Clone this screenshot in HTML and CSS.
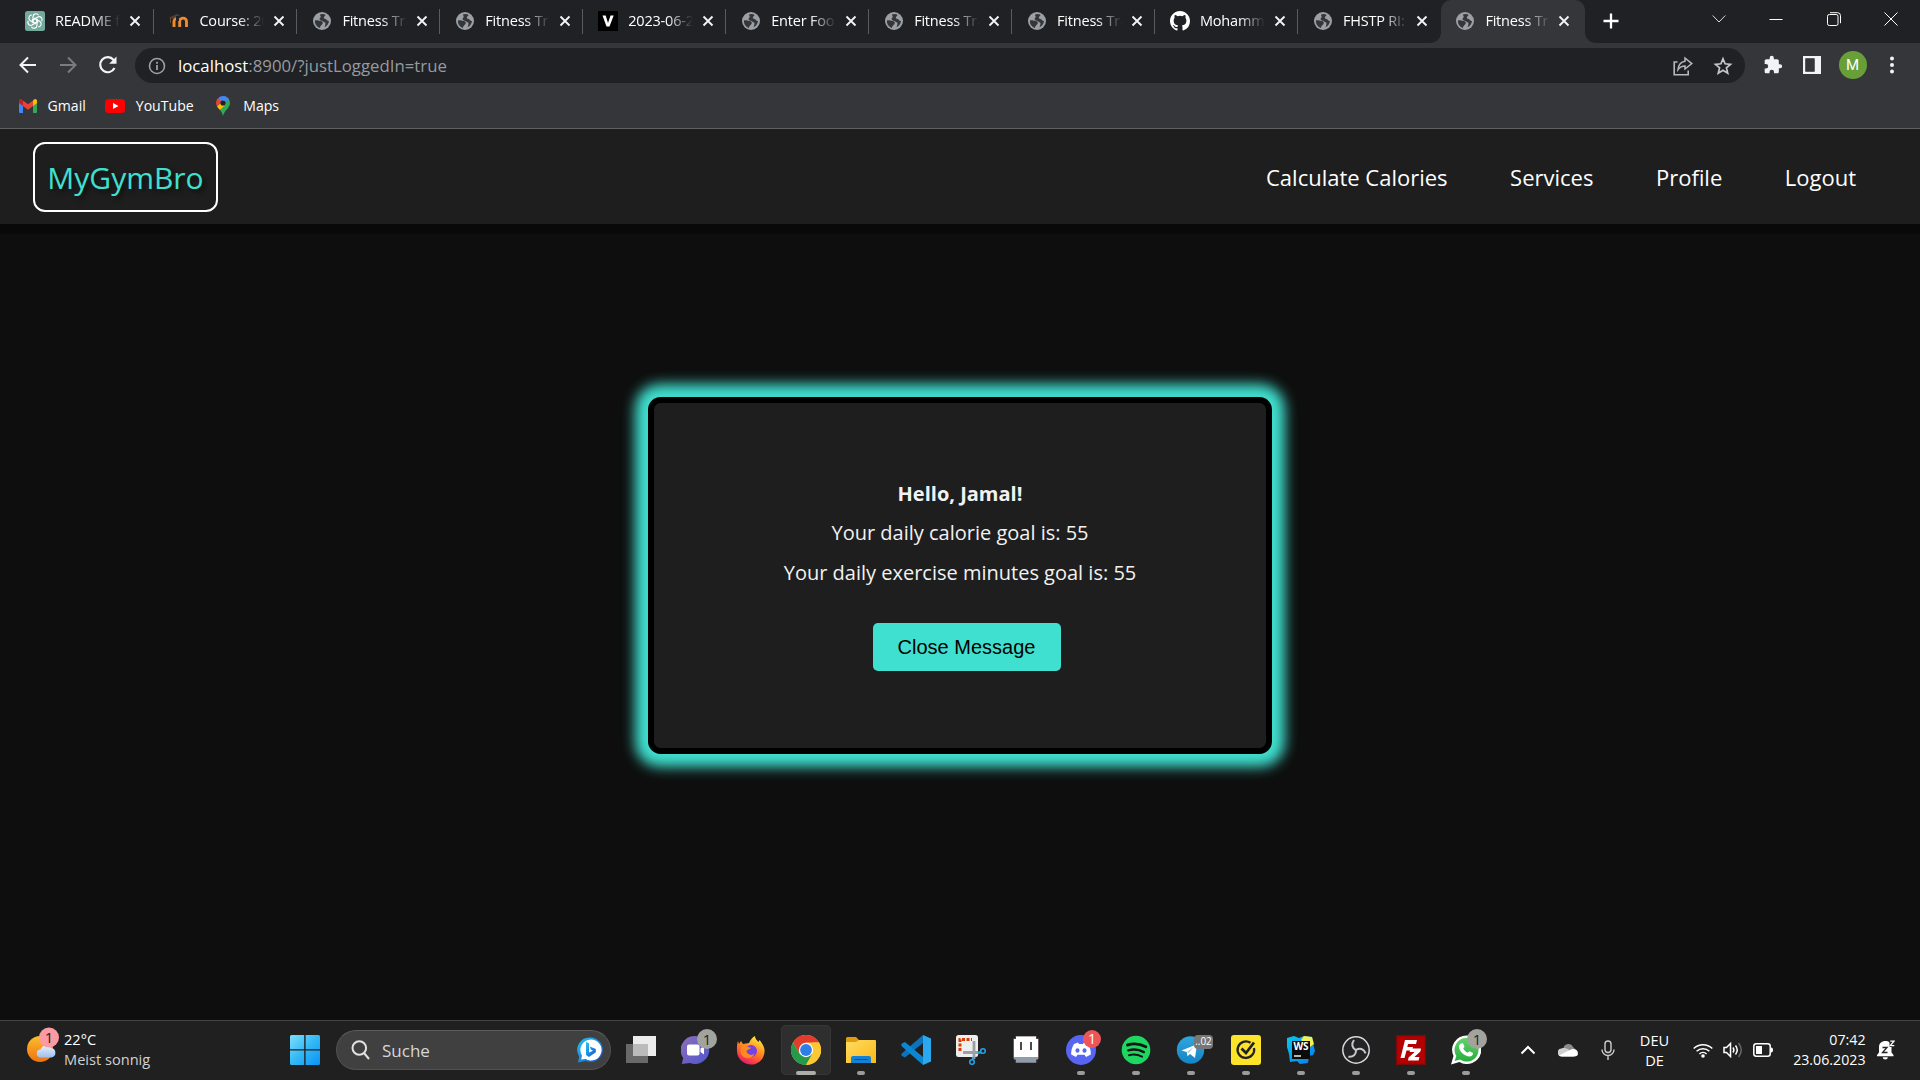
FILE: index.html
```html
<!DOCTYPE html>
<html lang="de">
<head>
<meta charset="utf-8">
<title>Fitness Tracker</title>
<link rel="stylesheet" href="styles.css">
</head>
<body>
<svg class="defs" width="0" height="0">
  <defs>
    <symbol id="globe" viewBox="0 0 20 20"><circle cx="10" cy="10" r="9" fill="#9aa0a6"/><path d="M3 9.500C5 9 6.500 10 8.500 10c2 .2 2.500 1.200 2.200 2.500-.4 1.500-2.400 1.500-2.700 4.500C5 16 2.500 13 3 9.500zM8 3.500c1.500-.8 4-.7 5.500.2-.3 1.500-1.600 1.700-1.700 3C11.700 8 14 7.500 15 9c.5.900 1.200 1.200 2 1-.3 3-2 5-4.500 6.200 1-2 .8-3.200 1-4.400-2-.6-2-1.800-4-2.100C7.300 9.300 7 7.500 8.500 6.500 9.300 5.800 8 5 8 3.500z" fill="#35363a"/></symbol>
    <symbol id="x" viewBox="0 0 12 12"><path d="M1.500 1.500l9 9M10.500 1.500l-9 9" stroke="#f1f3f4" stroke-width="1.900" fill="none"/></symbol>
    <linearGradient id="win" x1="0" y1="0" x2="1" y2="1"><stop offset="0" stop-color="#7de0fb"/><stop offset=".5" stop-color="#33b8f6"/><stop offset="1" stop-color="#0a93f5"/></linearGradient>
    <linearGradient id="sun" x1="0" y1="0" x2="0" y2="1"><stop offset="0" stop-color="#fbc02d"/><stop offset="1" stop-color="#f0700f"/></linearGradient>
    <linearGradient id="cloud" x1="0" y1="0" x2="0" y2="1"><stop offset="0" stop-color="#e8f0fc"/><stop offset="1" stop-color="#9dbfee"/></linearGradient>
    <linearGradient id="bing" x1="0" y1="0" x2="1" y2="1"><stop offset="0" stop-color="#25c4f2"/><stop offset="1" stop-color="#1554d0"/></linearGradient>
    <linearGradient id="chat" x1="0" y1="0" x2="1" y2="1"><stop offset="0" stop-color="#8e6fb8"/><stop offset="1" stop-color="#4f55cf"/></linearGradient>
    <linearGradient id="fox" x1=".8" y1="0" x2=".3" y2="1"><stop offset="0" stop-color="#fff44f"/><stop offset=".4" stop-color="#ff9a1f"/><stop offset=".75" stop-color="#ff4b3a"/><stop offset="1" stop-color="#e3147a"/></linearGradient>
    <linearGradient id="folder" x1="0" y1="0" x2="1" y2="1"><stop offset="0" stop-color="#ffdb63"/><stop offset="1" stop-color="#fbb917"/></linearGradient>
    <linearGradient id="tele" x1="0" y1="0" x2="0" y2="1"><stop offset="0" stop-color="#2fa6de"/><stop offset="1" stop-color="#1584c4"/></linearGradient>
    <linearGradient id="ws" x1="0" y1="0" x2="1" y2="1"><stop offset="0" stop-color="#08c6ef"/><stop offset="1" stop-color="#077cf0"/></linearGradient>
    <linearGradient id="wa" x1="0" y1="0" x2="0" y2="1"><stop offset="0" stop-color="#5fd46d"/><stop offset="1" stop-color="#27ad3d"/></linearGradient>
  </defs>
</svg>

<header class="browser">
  <div class="tabstrip">
    <div class="tab"><svg class="fav" viewBox="0 0 20 20"><rect width="20" height="20" rx="2.500" fill="#74aa9c"/><g fill="none" stroke="#fff" stroke-width="1.150"><path id="petal" d="M8 9V5.500a3 3 0 0 1 5.600-1.200M8 9v2.200l3 1.700"/><use href="#petal" transform="rotate(60 10 10)"/><use href="#petal" transform="rotate(120 10 10)"/><use href="#petal" transform="rotate(180 10 10)"/><use href="#petal" transform="rotate(240 10 10)"/><use href="#petal" transform="rotate(300 10 10)"/></g></svg><span class="title">README f</span><svg class="close"><use href="#x"/></svg></div>
    <div class="tab"><svg class="fav" viewBox="0 0 20 20"><path d="M0 6.500L8 3l3 1.500L4 8z" fill="#4b4038"/><path d="M1.500 7v5" stroke="#6a4a32" stroke-width="1"/><path d="M5 16v-5.500a2.600 2.600 0 0 1 5.700 0V16M10.700 10.500a3 3 0 0 1 6.800 0V16" fill="none" stroke="#f08a2c" stroke-width="2.900"/><path d="M7 5h3v5H7z" fill="#202124"/></svg><span class="title">Course: 20</span><svg class="close"><use href="#x"/></svg></div>
    <div class="tab"><svg class="fav"><use href="#globe"/></svg><span class="title">Fitness Tra</span><svg class="close"><use href="#x"/></svg></div>
    <div class="tab"><svg class="fav"><use href="#globe"/></svg><span class="title">Fitness Tra</span><svg class="close"><use href="#x"/></svg></div>
    <div class="tab"><svg class="fav" viewBox="0 0 20 20"><rect width="20" height="20" fill="#000"/><path d="M4.500 4.500h3.200L10 12l2.500-7.500h3.200L11.500 15.500h-3z" fill="#fff"/></svg><span class="title">2023-06-2</span><svg class="close"><use href="#x"/></svg></div>
    <div class="tab"><svg class="fav"><use href="#globe"/></svg><span class="title">Enter Foo</span><svg class="close"><use href="#x"/></svg></div>
    <div class="tab"><svg class="fav"><use href="#globe"/></svg><span class="title">Fitness Tra</span><svg class="close"><use href="#x"/></svg></div>
    <div class="tab"><svg class="fav"><use href="#globe"/></svg><span class="title">Fitness Tra</span><svg class="close"><use href="#x"/></svg></div>
    <div class="tab"><svg class="fav" viewBox="0 0 16 16"><path fill="#fff" d="M8 0C3.580 0 0 3.580 0 8c0 3.540 2.290 6.530 5.470 7.590.4.070.55-.17.55-.38 0-.19-.01-.82-.01-1.490-2.010.37-2.530-.49-2.690-.94-.09-.23-.48-.94-.82-1.130-.28-.15-.68-.52-.01-.53.63-.01 1.080.58 1.230.82.72 1.210 1.870.87 2.330.66.070-.52.28-.87.51-1.070-1.780-.2-3.640-.89-3.640-3.950 0-.87.31-1.590.82-2.150-.08-.2-.36-1.020.08-2.120 0 0 .67-.21 2.200.82a7.600 7.600 0 0 1 4 0c1.530-1.040 2.200-.82 2.200-.82.44 1.100.16 1.920.08 2.120.51.56.82 1.270.82 2.150 0 3.070-1.870 3.750-3.650 3.950.29.25.54.73.54 1.480 0 1.070-.01 1.930-.01 2.200 0 .21.15.46.55.38A8 8 0 0 0 16 8c0-4.420-3.580-8-8-8z"/></svg><span class="title">Mohamm</span><svg class="close"><use href="#x"/></svg></div>
    <div class="tab last"><svg class="fav"><use href="#globe"/></svg><span class="title">FHSTP RI:</span><svg class="close"><use href="#x"/></svg></div>
    <div class="tab active"><svg class="fav"><use href="#globe"/></svg><span class="title">Fitness Tra</span><svg class="close"><use href="#x"/></svg></div>
    <svg class="plus" viewBox="0 0 16 16"><path d="M8 .5v15M.5 8h15" stroke="#fff" stroke-width="2.300"/></svg>
    <div class="winctl">
      <svg viewBox="0 0 14 14"><path d="M.7 3.500L7 10l6.300-6.500" fill="none" stroke="#ddd"/></svg>
      <svg viewBox="0 0 14 14"><path d="M.5 7.500h13" stroke="#fff"/></svg>
      <svg viewBox="0 0 14 14"><rect x=".5" y="2.500" width="10.500" height="11" rx="1.800" fill="none" stroke="#fff"/><path d="M3 .7h7.500a3 3 0 0 1 3 3v7.500" fill="none" stroke="#fff"/></svg>
      <svg viewBox="0 0 14 14"><path d="M.5.500l13 13M13.500.500l-13 13" stroke="#fff"/></svg>
    </div>
  </div>

  <div class="toolbar">
    <svg class="tool back" viewBox="0 0 20 20"><path d="M18 10H3M10 2.500L2.500 10l7.500 7.500" fill="none" stroke="#f1f3f4" stroke-width="2"/></svg>
    <svg class="tool fwd" viewBox="0 0 20 20"><path d="M2 10H17M10 2.500l7.500 7.500-7.500 7.500" fill="none" stroke="#7b7c7f" stroke-width="2"/></svg>
    <svg class="tool reload" viewBox="0 0 20 20"><path d="M16.500 13A7.500 7.500 0 1 1 15.600 5L17 6.500" fill="none" stroke="#f1f3f4" stroke-width="2.200"/><path d="M18.500 1.500v7.300h-7.300z" fill="#f1f3f4"/></svg>
    <div class="omnibox">
      <svg class="info" viewBox="0 0 18 18"><circle cx="9" cy="9" r="7.500" fill="none" stroke="#9aa0a6" stroke-width="1.600"/><path d="M9 8v5M9 4.800v1.900" stroke="#9aa0a6" stroke-width="1.800"/></svg>
      <span class="url">localhost<i>:8900/?justLoggedIn=true</i></span>
      <svg class="share" viewBox="0 0 20 20"><path d="M4.500 6H1.200v12.800h14V14.500" fill="none" stroke="#b6b8bb" stroke-width="1.600"/><path d="M12 2l6.800 5.600L12 13v-3c-3 0-5 1-7 3.600C5.500 9 8 5.800 12 5.200z" fill="none" stroke="#b6b8bb" stroke-width="1.500"/></svg>
      <svg class="star" viewBox="0 0 20 20"><path d="M10 2.800l2.100 5 5.400.5-4.100 3.500 1.300 5.300-4.700-2.900-4.700 2.900 1.300-5.300-4.100-3.500 5.400-.5z" fill="none" stroke="#c5c7ca" stroke-width="1.700"/></svg>
    </div>
    <svg class="puzzle" viewBox="0 0 24 24"><path fill="#f1f3f4" d="M20.500 11H19V7c0-1.100-.9-2-2-2h-4V3.500a2.500 2.500 0 0 0-5 0V5H4c-1.100 0-2 .9-2 2v3.800h1.500a2.700 2.700 0 0 1 0 5.400H2V20c0 1.100.9 2 2 2h3.800v-1.500a2.700 2.700 0 0 1 5.400 0V22H17c1.100 0 2-.9 2-2v-4h1.500a2.500 2.500 0 0 0 0-5z"/></svg>
    <svg class="panel" viewBox="0 0 18 18"><rect x="1.200" y="1.200" width="15.600" height="15.600" fill="none" stroke="#f1f3f4" stroke-width="2.400"/><path d="M11.500 1h5.500v16h-5.500z" fill="#f1f3f4"/><path d="M2.500 2.500h9v13h-9z" fill="#35363a"/></svg>
    <span class="avatar">M</span>
    <svg class="dots" viewBox="0 0 4 18"><g fill="#f1f3f4"><circle cx="2" cy="2.500" r="2"/><circle cx="2" cy="9" r="2"/><circle cx="2" cy="15.500" r="2"/></g></svg>
  </div>

  <div class="bookmarks">
    <svg class="gmail" viewBox="0 0 18 14"><path d="M0 2v11a1 1 0 0 0 1 1h3V5z" fill="#4285f4"/><path d="M18 2v11a1 1 0 0 1-1 1h-3V5z" fill="#34a853"/><path d="M14 1.500V7l4-3V2c0-1.800-2-2.500-3.300-1.300z" fill="#fbbc04"/><path d="M4 7V1.500l5 3.800 5-3.800V7l-5 3.800z" fill="#ea4335"/><path d="M0 2v2l4 3V1.500L3.300.7C2-.5 0 .2 0 2z" fill="#c5221f"/></svg><span>Gmail</span>
    <svg class="yt" viewBox="0 0 20 14"><rect width="20" height="14" rx="3.500" fill="#f00"/><path d="M8 4l5.500 3L8 10z" fill="#fff"/></svg><span>YouTube</span>
    <svg class="maps" viewBox="0 0 14 20"><path d="M7 0a7 7 0 0 1 7 7c0 5-5.500 7-7 13-.6-2.500-1.700-4.200-3-6L12 3z" fill="#34a853"/><path d="M7 0a7 7 0 0 1 6 3.500L7 10 2 2.200A7 7 0 0 1 7 0z" fill="#4285f4"/><path d="M2 2.200L6 5.500 1 10.500C-.6 7.500-.2 4.500 2 2.200z" fill="#ea4335"/><path d="M1 10.500L8 4l1.500 4.500L4 14c-1.200-1.300-2.300-2.300-3-3.500z" fill="#fbbc04"/><circle cx="7" cy="7" r="2.600" fill="#202124"/></svg><span>Maps</span>
  </div>
</header>

<main class="page">
  <nav class="nav">
    <a class="brand">MyGymBro</a>
    <div class="links"><a>Calculate Calories</a><a>Services</a><a>Profile</a><a>Logout</a></div>
  </nav>
  <section class="stage">
    <div class="modal">
      <p class="hello">Hello, Jamal!</p>
      <p>Your daily calorie goal is: 55</p>
      <p>Your daily exercise minutes goal is: 55</p>
      <button class="btn">Close Message</button>
    </div>
  </section>
</main>

<footer class="taskbar">
  <div class="weather">
    <svg viewBox="0 0 32 44"><circle cx="13" cy="25" r="13" fill="url(#sun)"/><path d="M14 33.500a4 4 0 0 1-.5-8 6 6 0 0 1 10.500-1.500 4.800 4.800 0 0 1 .5 9.500z" fill="url(#cloud)"/><circle cx="22" cy="13.500" r="10" fill="#fc9aa4"/><text x="22" y="19" text-anchor="middle" font-size="15" fill="#1c1c1c">1</text></svg>
    <div class="wtext"><span>22°C</span><span class="desc">Meist sonnig</span></div>
  </div>
  <svg class="start" viewBox="0 0 30 30"><path d="M1.500 0h12.700v14.200H0V1.500A1.500 1.500 0 0 1 1.500 0zM15.600 0h12.900A1.500 1.500 0 0 1 30 1.500v12.700H15.600zM0 15.600h14.200V30H1.500A1.500 1.500 0 0 1 0 28.500zM15.600 15.600H30v12.900a1.500 1.500 0 0 1-1.500 1.500H15.600z" fill="url(#win)"/></svg>
  <div class="search">
    <svg class="mag" viewBox="0 0 20 20"><circle cx="8.300" cy="8" r="6.800" fill="none" stroke="#e2e2e2" stroke-width="2"/><path d="M13 13l5 6" stroke="#e2e2e2" stroke-width="2"/></svg>
    <span>Suche</span>
    <svg class="bing" viewBox="0 0 26 26"><path d="M13.500.5a12.300 12.300 0 1 1-5 23.500L1 25.500l1.200-6A12.400 12.400 0 0 1 13.500.5z" fill="url(#bing)"/><path d="M13.700 2.500a10.500 10.500 0 1 1-5 19.500l-4.500.5.800-4A10.500 10.500 0 0 1 13.700 2.500z" fill="#fff"/><path d="M9 5l3 1.200v9.300l4-1.700-2.200-1.200-1-3 6 2.300v3.300L12 20l-3-2z" fill="url(#bing)"/></svg>
  </div>
  <div class="apps">
    <div class="app"><svg viewBox="0 0 30 30"><path d="M7 1h23v20H7z" fill="#ececec"/><path d="M0 9h22v19H0z" fill="#777" fill-opacity=".85"/><path d="M7 9h15v12H7z" fill="#bbb"/></svg></div>
    <div class="app"><svg viewBox="0 0 30 30"><path d="M14.500 1A14 14 0 1 1 9 28L.8 29l1.400-6A14 14 0 0 1 14.500 1z" fill="url(#chat)"/><rect x="6" y="9.500" width="12.500" height="11" rx="2" fill="#fff"/><path d="M19.500 13.500l3.500-2.500v8.500l-3.500-2.500z" fill="#fff"/></svg><b class="badge gray">1</b></div>
    <div class="app"><svg viewBox="0 0 30 30"><path d="M2 6l1 3 2-3 2 3c2 0 4-1 6-1 1.500-3 3-5.500 6-7 0 2.500 1.500 4 3.500 6l1-2c3 4 5.500 7 5 12C28 24.500 22 29.500 15 29.500S1 24 1 16C.8 12 1 9 2 6z" fill="url(#fox)"/><circle cx="15" cy="16" r="6" fill="#7542e5"/><path d="M5 12c3-2 6-1 7 0l3 .8c-1 2-4 1.500-4.500 3.500.5 3 4.500 5 8 2.500-3 7-13 5-14-2z" fill="#ff8a1e"/></svg></div>
    <div class="app current"><svg viewBox="0 0 30 30"><circle cx="15" cy="15" r="15" fill="#fcc934"/><path d="M2 7.500A15 15 0 0 1 28 7.500H15L8.500 18.800z" fill="#e33b2e"/><path d="M2 7.500a15 15 0 0 0 13 22.500l6.500-11.200H8.500z" fill="#249a4a"/><path d="M28 7.500A15 15 0 0 1 15 30l6.500-11.200V7.500z" fill="#fcc934"/><circle cx="15" cy="15" r="7.200" fill="#fff"/><circle cx="15" cy="15" r="5.900" fill="#2f7de9"/></svg><em class="run"></em></div>
    <div class="app"><svg viewBox="0 0 30 30"><path d="M0 3.500A1.500 1.500 0 0 1 1.500 2H10l3 3v4H0z" fill="#e09c0c"/><path d="M0 7h10l3-2h16a1 1 0 0 1 1 1v22H0z" fill="url(#folder)"/><path d="M5 28v-5a2 2 0 0 1 2-2h16a2 2 0 0 1 2 2v5z" fill="#1281d6"/><path d="M8.500 24.500h13" stroke="#0b4f94"/></svg><em class="run"></em></div>
    <div class="app"><svg viewBox="0 0 30 30"><path d="M22 0v8L4 22.500 1 21q-1.500-1.500 0-2.800z" fill="#0a73bb"/><path d="M1 8.500L4 7l18 15v8L1 11.500q-1.500-1.500 0-3z" fill="#0c86d0"/><path d="M22 0l8 3.500v23L22 30z" fill="#2aa9f0"/></svg></div>
    <div class="app"><svg viewBox="0 0 30 30"><rect width="22" height="22" rx="2.500" fill="#eee"/><path d="M4 16V4.500h12" fill="none" stroke="#d83b01" stroke-width="3" stroke-dasharray="3 1.500"/><path d="M7 17.500h15M18 6v18" stroke="#9aa0a6" stroke-width="2.800"/><path d="M22 18l3-1M17 22v3" stroke="#269fe0" stroke-width="2.500"/><circle cx="27" cy="16" r="2.300" fill="none" stroke="#269fe0" stroke-width="1.600"/><circle cx="16" cy="27" r="2.300" fill="none" stroke="#269fe0" stroke-width="1.600"/></svg></div>
    <div class="app"><svg viewBox="0 0 30 30"><path d="M4.500 1h21v2.500H28v20h-2.500V28h-21v-4.500H2v-20h2.500z" fill="#665962"/><path d="M5 1.500h20v2.500h2v18H3V4h2z" fill="#fff"/><path d="M3 22h24v2.500h-2v3H5v-3H3z" fill="#8f9daa"/><path d="M10 7v8M20 7v8" stroke="#504550" stroke-width="2"/></svg></div>
    <div class="app"><svg viewBox="0 0 30 30"><circle cx="15" cy="15" r="15" fill="#5865f2"/><path d="M8 9l4-1.500 1 1.500h4l1-1.500L22 9c2.200 3.500 3 7 2.800 10.500L20 22l-1.500-2.300h-7L10 22l-4.800-2.500C5 16 5.800 12.500 8 9z" fill="#fff"/><ellipse cx="11.500" cy="15.500" rx="2" ry="2.300" fill="#5865f2"/><ellipse cx="18.500" cy="15.500" rx="2" ry="2.300" fill="#5865f2"/></svg><b class="badge red">1</b><em class="run"></em></div>
    <div class="app"><svg viewBox="0 0 30 30"><circle cx="15" cy="15" r="14.300" fill="#1ed760"/><g fill="none" stroke="#151515" stroke-linecap="round"><path d="M6.500 10c6-1.800 13-1 18.300 1.800" stroke-width="2.900"/><path d="M7.300 15.300c5.500-1.500 11-.8 15.600 1.800" stroke-width="2.400"/><path d="M8 20.200c4.500-1.200 9-.6 13 1.500" stroke-width="2"/></g></svg><em class="run"></em></div>
    <div class="app"><svg viewBox="0 0 30 30"><circle cx="14.500" cy="15" r="13.700" fill="url(#tele)"/><path d="M5.500 15.500L21 9.200l-2 13.800-5-4-2.500 2.300-.8-4.300z" fill="#fff"/><path d="M10.700 17l7-5-5 6z" fill="#a8cfe5"/></svg><b class="badge dots2">..02</b><em class="run"></em></div>
    <div class="app"><svg viewBox="0 0 30 30"><rect width="30" height="30" rx="3" fill="#fde42b"/><path d="M19.500 7.800A8.300 8.300 0 1 0 23 13" fill="none" stroke="#222" stroke-width="2.300"/><path d="M10.500 13.500l4.500 4.500L23 7.500" fill="none" stroke="#222" stroke-width="2.800"/></svg><em class="run"></em></div>
    <div class="app"><svg viewBox="0 0 30 30"><path d="M1 3l7-2 5 2 5-2 8 1 1 6 2 8-2 4-4 1-1 7-8 1-3-3-7 1-1-8-2-7z" fill="url(#ws)"/><path d="M15 5l3-4 8 1 2 7-4 3z" fill="#f4ef56"/><rect x="6" y="6" width="18" height="18" fill="#0b0b0b"/><text x="15" y="15" text-anchor="middle" font-size="10" font-weight="700" fill="#fff" textLength="15">WS</text><path d="M8 21h7" stroke="#fff" stroke-width="1.400"/></svg><em class="run"></em></div>
    <div class="app"><svg viewBox="0 0 30 30"><circle cx="15" cy="15" r="13.200" fill="#242326" stroke="#d9d9d9" stroke-width="1.500"/><g fill="none" stroke="#c9c9c9" stroke-width="2"><path id="obs" d="M15 15c-4-2-5-6-2-10"/><use href="#obs" transform="rotate(120 15 15)"/><use href="#obs" transform="rotate(240 15 15)"/></g></svg><em class="run"></em></div>
    <div class="app"><svg viewBox="0 0 30 30"><rect x=".7" y=".7" width="28.600" height="28.600" fill="#b30000" stroke="#8d0505" stroke-width="1.400" stroke-dasharray="2 1"/><path d="M9 5h12l-1 4h-8l-.7 3H17l-1 3.500h-5.500L8.500 23H4.500z" fill="#fff"/><path d="M14.500 13.500H25l-.6 3-6 5.500h5l-.8 3.500H12l.6-3 6-5.500h-5z" fill="#fff"/></svg><em class="run"></em></div>
    <div class="app"><svg viewBox="0 0 30 30"><path d="M15.500.5A14.300 14.300 0 1 1 8.500 27L0 29.500 2.500 21A14.300 14.300 0 0 1 15.500.5z" fill="#fff"/><path d="M15.500 3A11.800 11.800 0 1 1 9 24.500l-5.300 1.600 1.600-5.200A11.800 11.800 0 0 1 15.500 3z" fill="url(#wa)"/><path d="M10 8.500l2-.3 1.500 3.500-1.300 1.800c1 2 2.500 3.300 4.500 4.300l1.800-1.500 3.500 1.700c.2 2-1.500 3.500-3.500 3.500-5 0-10.500-5.500-10.500-10 0-1.300.8-2.500 2-3z" fill="#fff"/></svg><b class="badge gray">1</b><em class="run"></em></div>
  </div>
  <div class="tray">
    <svg class="chev" viewBox="0 0 16 10"><path d="M1.500 8.500L8 2l6.500 6.500" fill="none" stroke="#fff" stroke-width="2"/></svg>
    <svg class="cloud" viewBox="0 0 20 14"><path d="M5.500 5a5 5 0 0 1 9.500-1l2 2-7 4z" fill="#8c8c8c"/><path d="M4 13.500a4 4 0 0 1-.5-8c3-1 6 0 8.500 2l4 6z" fill="#cfcfcf"/><path d="M4 13.500c-2 0-3-1-3-1L13 6.500c4-1.500 7 1 7 4 0 1.800-1.500 3-3.500 3z" fill="#fff"/></svg>
    <svg class="mic" viewBox="0 0 14 20"><rect x="4" y="1" width="6" height="11.500" rx="3" fill="none" stroke="#ccc" stroke-width="1.400"/><path d="M1 9.500a6 6 0 0 0 12 0M7 15.500V20" fill="none" stroke="#ccc" stroke-width="1.400"/></svg>
    <div class="lang"><span>DEU</span><span>DE</span></div>
    <svg class="wifi" viewBox="0 0 20 16"><g fill="none" stroke="#fff" stroke-width="1.500"><path d="M.7 6.500a13.300 13.300 0 0 1 18.600 0M3.600 9.300a9.200 9.200 0 0 1 12.800 0M6.400 12a5.200 5.200 0 0 1 7.200 0"/></g><circle cx="10" cy="14" r="1.800" fill="#fff"/></svg>
    <svg class="vol" viewBox="0 0 20 16"><path d="M1 5.500h2.500L7.500 1.500v13L3.500 10.500H1z" fill="none" stroke="#fff" stroke-width="1.500"/><path d="M10 5.500q1.800 2.500 0 5M12.500 3.500q3.500 4.500 0 9" fill="none" stroke="#fff" stroke-width="1.500"/><path d="M15.500 1q5.500 7 0 14" fill="none" stroke="#666" stroke-width="1.500"/></svg>
    <svg class="bat" viewBox="0 0 20 14"><rect x=".8" y=".8" width="16.400" height="12.400" rx="2.500" fill="none" stroke="#fff" stroke-width="1.500"/><rect x="3" y="3" width="6" height="8" fill="#fff"/><path d="M18 4.500c1.500 0 2 1 2 2.500s-.5 2.500-2 2.500z" fill="#fff"/></svg>
    <div class="clock"><span>07:42</span><span>23.06.2023</span></div>
    <svg class="bell" viewBox="0 0 18 20"><path d="M8.500 1C4.500 1 2 3.500 2 7v5.500L0 15v1.200h16.500V15l-2-2.500V7c0-3.500-2-6-6-6z" fill="#fff"/><path d="M5.800 17.200h5c0 3-5 3-5 0z" fill="#fff"/><path d="M5.500 7.500h4.500l-4.500 5h5" fill="none" stroke="#222" stroke-width="1.300"/><path d="M12.500 0H18v7h-5.500z" fill="#202020"/><path d="M13.300 1.200h3.700l-3.700 4.500h4" fill="none" stroke="#fff" stroke-width="1.300"/></svg>
  </div>
</footer>
</body>
</html>
```
FILE: styles.css
```css
* { box-sizing: border-box; }
body { margin: 0; width: 1920px; height: 1080px; overflow: hidden; display: flex; flex-direction: column; background: #0e0e0e; color: #fff; font-family: "Open Sans", "Noto Sans", sans-serif; }
svg { display: block; flex: none; }
.defs { position: absolute; }
p { margin: 0; }

.browser { height: 129px; background: #35363a; border-bottom: 1px solid #5f6064; display: flex; flex-direction: column; flex: none; }
.tabstrip { height: 43px; flex: none; background: #202124; display: flex; align-items: center; padding-left: 11.500px; }
.tab { width: 142.950px; height: 43px; flex: none; display: flex; align-items: center; padding-left: 15px; position: relative; }
.tab:first-child { padding-left: 13.500px; }
.tab::after { content: ""; position: absolute; right: 0; top: 9px; width: 1px; height: 25px; background: #5a5b5f; }
.tab.last::after { display: none; }
.tab.active { background: #35363a; border-radius: 10px 10px 0 0; width: 144px; padding-left: 14.500px; }
.tab.active::after { left: -10px; right: -10px; top: auto; bottom: 0; width: auto; height: 10px; background: radial-gradient(circle at 0 0, transparent 9.500px, #35363a 10px) left / 10px 10px no-repeat, radial-gradient(circle at 100% 0, transparent 9.500px, #35363a 10px) right / 10px 10px no-repeat; }
.fav { width: 20px; height: 20px; margin-bottom: 1px; }
.title { margin-left: 10px; width: 65px; padding-bottom: 3px; font-size: 14.500px; letter-spacing: -0.200px; white-space: nowrap; -webkit-mask-image: linear-gradient(90deg, #000 60%, transparent); mask-image: linear-gradient(90deg, #000 60%, transparent); }
.close { width: 12px; height: 12px; margin: 0 0 1px 8.500px; }
.active .close { margin-left: 7.500px; }
.plus { width: 16px; height: 16px; margin: 0 0 1px 18.500px; }
.winctl { margin-left: auto; padding-right: 22px; display: flex; gap: 43.300px; margin-bottom: 6px; }
.winctl svg { width: 14px; height: 14px; }

.toolbar { height: 44px; flex: none; display: flex; align-items: center; }
.tool { width: 20px; height: 20px; }
.back { margin-left: 18px; }
.fwd { margin-left: 20px; }
.reload { margin-left: 20px; }
.omnibox { margin-left: 17px; width: 1610px; height: 35px; margin-top: 1px; border-radius: 18px; background: #202124; display: flex; align-items: center; padding: 0 12px 0 13px; }
.info { width: 18px; height: 18px; }
.url { margin-left: 12px; font-size: 16.800px; }
.url i { font-style: normal; color: #969ba1; }
.share { width: 20px; height: 20px; margin-left: auto; }
.star { width: 20px; height: 20px; margin-left: 20px; }
.puzzle { width: 20px; height: 20px; margin-left: 18px; }
.panel { width: 18px; height: 18px; margin-left: 20px; }
.avatar { width: 28px; height: 28px; margin-left: 17.500px; border-radius: 50%; background: #689f38; display: flex; align-items: center; justify-content: center; font: 15px Roboto, sans-serif; }
.dots { width: 4px; height: 18px; margin-left: 23px; }

.bookmarks { flex: 1; display: flex; align-items: center; padding: 0 0 4px 19px; font-size: 14.100px; }
.bookmarks span { padding-bottom: 1px; }
.gmail { width: 18px; height: 14px; margin-right: 10.500px; }
.yt { width: 20px; height: 14px; margin: 0 10.500px 0 19.500px; }
.maps { width: 14px; height: 20px; margin: 0 13px 0 22.500px; }

.page { flex: 1; display: flex; flex-direction: column; }
.nav { height: 95px; flex: none; background: #1e1e1e; box-shadow: 0 10px 0 #090909; display: flex; align-items: center; justify-content: space-between; padding: 0 64px 0 33px; }
.brand { width: 185px; height: 70px; padding-top: 2px; border: 2px solid #fff; border-radius: 12px; display: flex; align-items: center; justify-content: center; font-size: 30px; color: #40e0d0; text-shadow: 3px 3px 5px rgba(0, 0, 0, .6); }
.links { display: flex; gap: 62.500px; font-size: 22px; }
.stage { flex: 1; display: flex; justify-content: center; align-items: flex-start; padding-top: 172.500px; }
.modal { width: 624px; height: 357.500px; background: #1e1e1e; border: 6px solid #000; border-radius: 12.500px; box-shadow: 0 0 12.500px 12.500px #40e0d0; display: flex; flex-direction: column; align-items: center; padding-top: 71.500px; font-size: 20px; line-height: 39.400px; color: #f2f2f2; }
.hello { font-weight: 700; }
.btn { margin: 30.800px 0 0 13px; width: 188px; height: 48px; border: 0; border-radius: 5px; background: #40e0d0; color: #000; font: 20px "Liberation Sans", Arial, sans-serif; padding: 0; }

.taskbar { height: 60px; flex: none; background: #202020; border-top: 1px solid #454545; display: flex; align-items: center; font-size: 15px; padding-bottom: 1px; }
.weather { width: 290px; padding-left: 27px; display: flex; align-items: center; }
.weather svg { width: 32px; height: 44px; margin-top: -8px; }
.wtext { margin: -2px 0 0 5px; display: flex; flex-direction: column; line-height: 20px; font-size: 14.600px; }
.desc { color: #d0d0d0; }
.start { width: 30px; height: 30px; }
.search { margin-left: 16px; width: 275px; height: 40px; border-radius: 20px; background: #404040; border: 1px solid #505050; border-top-color: #5c5c5c; display: flex; align-items: center; padding: 0 7px 0 14px; font-size: 17px; color: #d6d6d6; }
.mag { width: 20px; height: 20px; margin-right: 11px; }
.bing { width: 26px; height: 26px; margin-left: auto; }
.apps { display: flex; margin-left: 2.500px; }
.app { width: 55px; height: 60px; display: flex; align-items: center; justify-content: center; position: relative; }
.app svg { width: 30px; height: 30px; }
.app.current { background: #2e2e2e; width: 50px; height: 50px; margin: 5px 2.500px; border-radius: 5px; box-shadow: inset 0 0 0 1px #363636; }
.run { position: absolute; bottom: 5px; left: 50%; width: 8px; height: 4px; margin-left: -4px; border-radius: 2px; background: #9b9b9b; }
.current .run { bottom: 0; width: 20px; margin-left: -10px; background: #adadaa; }
.badge { position: absolute; left: 28.500px; top: 9px; width: 20px; height: 20px; border-radius: 10px; font-weight: 400; font-size: 15px; line-height: 20px; text-align: center; }
.gray { background: #a3a39e; color: #222; }
.red { left: 29.500px; top: 10px; width: 18px; height: 18px; line-height: 18px; background: #ed5558; font-size: 14px; }
.dots2 { left: 30.500px; top: 15px; width: 19px; height: 14px; line-height: 13px; border-radius: 4px; background: #777; font-size: 10px; }
.tray { flex: 1; display: flex; align-items: center; }
.chev { width: 16px; height: 10px; margin-left: 26px; }
.cloud { width: 20px; height: 14px; margin-left: 22px; }
.mic { width: 14px; height: 20px; margin-left: 23px; }
.lang { width: 40px; margin: -1px 0 0 20px; display: flex; flex-direction: column; align-items: center; line-height: 20px; font-size: 14.600px; }
.wifi { width: 20px; height: 16px; margin-left: 18px; }
.vol { width: 20px; height: 16px; margin-left: 10px; }
.bat { width: 20px; height: 14px; margin-left: 10px; }
.clock { width: 93px; margin-top: -1px; display: flex; flex-direction: column; align-items: flex-end; line-height: 20px; font-size: 14.200px; }
.bell { width: 18px; height: 20px; margin-left: 11px; }
```
